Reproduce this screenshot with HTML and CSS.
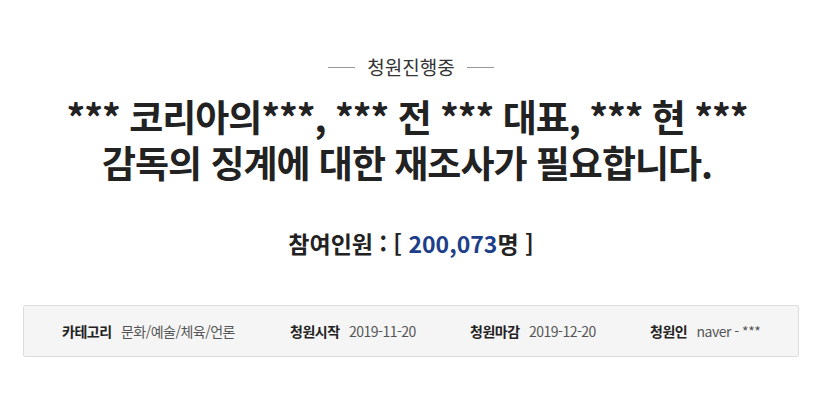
FILE: index.html
```html
<!DOCTYPE html>
<html lang="ko">
<head>
    <meta charset="UTF-8">
    <meta name="viewport" content="width=device-width, initial-scale=1.0">
    <title>청원진행중</title>
    <link rel="stylesheet" href="styles.css">
</head>
<body>
    <div class="petition">
        <div class="status">
            <span class="rule"></span>
            <span class="status-text">청원진행중</span>
            <span class="rule"></span>
        </div>

        <h1 class="title">*** 코리아의***, *** 전 *** 대표, *** 현 ***<br>감독의 징계에 대한 재조사가 필요합니다.</h1>

        <p class="count">참여인원 : [ <span class="count-num">200,073</span>명 ]</p>

        <ul class="meta">
            <li><strong>카테고리</strong> 문화/예술/체육/언론</li>
            <li><strong>청원시작</strong> 2019-11-20</li>
            <li><strong>청원마감</strong> 2019-12-20</li>
            <li><strong>청원인</strong> naver - ***</li>
        </ul>
    </div>
</body>
</html>
```

FILE: styles.css
```css
body {
    margin: 0;
    background-color: #fff;
    font-family: "Noto Sans CJK KR", "Noto Sans", sans-serif;
    color: #222;
}

.petition {
    padding: 52px 17px 0 23px;
}

.status {
    display: flex;
    justify-content: center;
    align-items: center;
    gap: 12px;
}

.rule {
    width: 27px;
    height: 1px;
    background-color: #999;
}

.status-text {
    font-size: 19px;
    color: #333;
    line-height: 30px;
}

.title {
    margin: 11px 8px 0 0;
    text-align: center;
    font-size: 37px;
    font-weight: 700;
    line-height: 46px;
    letter-spacing: -1px;
    color: #222;
}

.count {
    margin: 41px 0 0;
    text-align: center;
    font-size: 23px;
    font-weight: 700;
    line-height: 34px;
    color: #222;
}

.count-num {
    color: #1d3f8a;
}

.meta {
    list-style: none;
    margin: 45px 0 0;
    padding: 0 0 0 38px;
    height: 50px;
    display: flex;
    align-items: center;
    background-color: #f5f5f5;
    border: 1px solid #ddd;
    border-radius: 2px;
    font-size: 14px;
    color: #555;
}

.meta li {
    flex: none;
    letter-spacing: -0.5px;
}

.meta li:nth-child(1) { width: 228px; }
.meta li:nth-child(2) { width: 180px; }
.meta li:nth-child(3) { width: 180px; }

.meta strong {
    color: #222;
    margin-right: 6px;
}
```
